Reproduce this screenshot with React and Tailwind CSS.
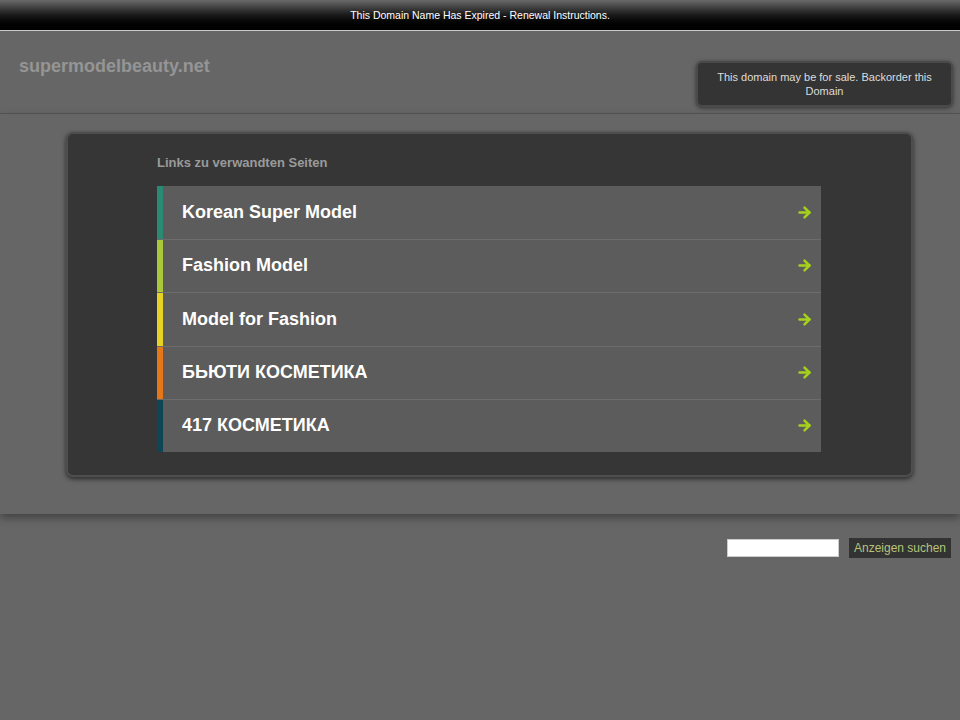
import { ArrowRight } from 'lucide-react';

const links = [
  { label: 'Korean Super Model', bar: 'bg-[#2a8a74]', h: 'h-[53px]' },
  { label: 'Fashion Model', bar: 'bg-[#a9c83c]', h: 'h-[53px]' },
  { label: 'Model for Fashion', bar: 'bg-[#e6d324]', h: 'h-[54px]' },
  { label: 'БЬЮТИ КОСМЕТИКА', bar: 'bg-[#e47818]', h: 'h-[53px]' },
  { label: '417 КОСМЕТИКА', bar: 'bg-[#0f4656]', h: 'h-[53px]' },
];

export default function App() {
  return (
    <div className="min-h-[720px] bg-[#666] font-['Liberation_Sans',Arial,sans-serif]">
      <div className="h-[31px] pt-[1px] border-b border-[#ccc] bg-gradient-to-b from-[#6a6a6a] via-[#1a1a1a] to-black flex items-center justify-center text-[10.5px] text-white">
        This Domain Name Has Expired - Renewal Instructions.
      </div>

      <div className="h-[83px] border-b border-[#555] flex justify-between px-[7px]">
        <div className="pl-[12px] pt-[22px] text-[18px] font-bold text-[#959595]">supermodelbeauty.net</div>
        <div className="mt-[30px] w-[257px] h-[46px] rounded-[6px] bg-[#343434] border-[2px] border-[#4a4a4a] shadow-[0_1px_4px_rgba(0,0,0,0.5)] flex items-center justify-center text-center text-[11px] leading-[14px] text-[#ddd] px-3">
          This domain may be for sale. Backorder this Domain
        </div>
      </div>

      <div className="h-[400px] pt-[18px] shadow-[0_4px_8px_rgba(0,0,0,0.35)] relative">
        <div className="ml-[66px] mr-[47px] h-[345px] rounded-[7px] bg-[#363636] border-[2px] border-[#4e4e4e] shadow-[0_2px_5px_rgba(0,0,0,0.6)] pt-[19px] pl-[89px] pr-[90px]">
          <div className="text-[13px] font-bold text-[#9a9a9a] mb-[13px]">Links zu verwandten Seiten</div>
          <div className="flex flex-col">
            {links.map((l, i) => (
              <div key={i} className={`flex ${l.h} bg-[#5c5c5c] ${i > 0 ? 'border-t border-[#6c6c6c]' : ''}`}>
                <div className={`w-[6px] ${l.bar}`} />
                <div className="flex-1 flex items-center justify-between pl-[19px] pr-[8px]">
                  <span className="text-[18px] font-bold text-white">{l.label}</span>
                  <ArrowRight size={17} strokeWidth={3.5} className="text-[#a6d21c]" />
                </div>
              </div>
            ))}
          </div>
        </div>
      </div>

      <div className="flex justify-end items-center gap-[10px] pt-[24px] pr-[9px]">
        <div className="w-[112px] h-[18px] bg-white border border-[#ccc]" />
        <div className="w-[102px] h-[20px] bg-[#333] text-[12px] text-[#b6c47a] flex items-center justify-center">Anzeigen suchen</div>
      </div>
    </div>
  );
}
